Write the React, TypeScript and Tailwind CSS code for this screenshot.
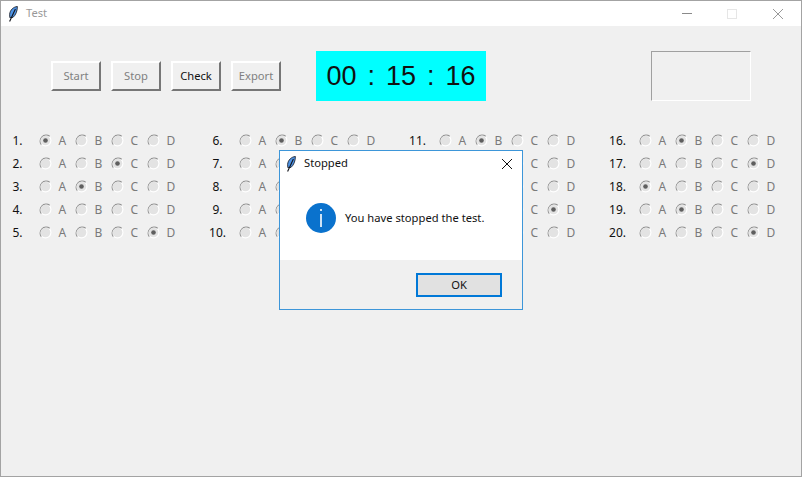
const FONT = "font-['Noto_Sans','Open_Sans',sans-serif]"

const ANSWERS: (string | null)[] = [
  'A', 'C', 'B', null, 'D',
  'B', null, null, null, null,
  'B', null, null, 'D', null,
  'B', 'D', 'A', 'B', 'D',
]

const OPTIONS = ['A', 'B', 'C', 'D']

function Feather({ className }: { className: string }) {
  return (
    <svg viewBox="0 0 10 16" className={className}>
      <path d="M9.4 0.5 C5.4 0.8 2 4 1.6 8.4 L1.8 11.6 L5 11.4 C7.8 9 9.4 5 9.4 0.5 Z" fill="#4f94e6" stroke="#10131a" strokeWidth="0.8" />
      <path d="M7.4 3 L1.6 15.4" stroke="#10131a" strokeWidth="1.1" fill="none" />
    </svg>
  )
}

function Radio({ checked }: { checked: boolean }) {
  return (
    <svg viewBox="0 0 13 13" className="h-[13px] w-[13px] shrink-0">
      <circle cx="6.5" cy="6.5" r="6" fill="#ffffff" />
      <path d="M2.3 10.7 A6 6 0 0 1 10.7 2.3" fill="none" stroke="#8f8f8f" strokeWidth="1.1" />
      <circle cx="6.5" cy="6.5" r="4.8" fill="#e3e3e3" />
      {checked && <circle cx="6.5" cy="6.5" r="2.3" fill="#5f5f5f" />}
    </svg>
  )
}

function Question({ number, answer }: { number: number; answer: string | null }) {
  return (
    <div className="flex h-[23px] items-center">
      <div className="w-[33px] text-center text-[12px] text-[#111111]">{number}.</div>
      <div className="ml-[4.5px] flex">
        {OPTIONS.map((option) => (
          <div key={option} className="flex w-[36px] items-center gap-[7px]">
            <Radio checked={answer === option} />
            <span className="text-[12px] text-[#7a7a7a]">{option}</span>
          </div>
        ))}
      </div>
    </div>
  )
}

function ToolButton({ label, active }: { label: string; active?: boolean }) {
  return (
    <button
      className={`h-[30px] w-[50px] border-2 border-t-[#ffffff] border-r-[#767676] border-b-[#767676] border-l-[#ffffff] bg-[#f0f0f0] text-[11.2px] ${
        active ? 'text-[#111111]' : 'text-[#808080]'
      }`}
    >
      {label}
    </button>
  )
}

function Dialog() {
  return (
    <div className="absolute top-[149px] left-[278px] flex h-[160px] w-[244px] flex-col border border-[#3d96d9] bg-white">
      <div className="flex h-[25px] items-center pl-[6px]">
        <Feather className="h-[16px] w-[10px]" />
        <span className="ml-[8px] text-[11.2px] text-[#111111]">Stopped</span>
        <svg viewBox="0 0 12 12" className="mr-[9px] ml-auto h-[12px] w-[12px]">
          <path d="M1 1 L11 11 M11 1 L1 11" stroke="#111111" strokeWidth="1" fill="none" />
        </svg>
      </div>
      <div className="flex flex-1 items-start pt-[27px] pl-[26px]">
        <div className="flex h-[30px] w-[30px] items-center justify-center rounded-full bg-[#0a72cd]">
          <svg viewBox="0 0 4 18" className="h-[18px] w-[4px]">
            <rect x="1.2" y="0" width="1.6" height="2" fill="#ffffff" />
            <rect x="1.2" y="5" width="1.6" height="13" fill="#ffffff" />
          </svg>
        </div>
        <span className="mt-[7px] ml-[9px] text-[11.2px] text-[#111111]">You have stopped the test.</span>
      </div>
      <div className="flex h-[49px] justify-end bg-[#f0f0f0] pt-[13px] pr-[20px]">
        <button className="h-[24px] w-[86px] border-2 border-[#0078d7] bg-[#e1e1e1] text-[11.2px] text-[#111111]">OK</button>
      </div>
    </div>
  )
}

export default function App() {
  const columns = [0, 1, 2, 3]

  return (
    <div className={`relative flex h-[477px] w-[802px] flex-col overflow-hidden border border-[#a3a3a3] bg-[#f0f0f0] ${FONT}`}>
      <div className="flex h-[25px] items-center bg-white pl-[7px]">
        <Feather className="h-[16px] w-[10px]" />
        <span className="ml-[8px] text-[11.2px] text-[#999999]">Test</span>
        <div className="ml-auto flex items-center">
          <div className="h-px w-[10px] bg-[#8a8a8a]" />
          <div className="ml-[35px] h-[10px] w-[10px] border border-[#e6e6e6]" />
          <svg viewBox="0 0 12 12" className="mr-[17px] ml-[35px] h-[12px] w-[12px]">
            <path d="M1 1 L11 11 M11 1 L1 11" stroke="#999999" strokeWidth="1" fill="none" />
          </svg>
        </div>
      </div>

      <div className="mt-[25px] flex h-[50px] pl-[50px]">
        <div className="flex items-center gap-[10px]">
          <ToolButton label="Start" />
          <ToolButton label="Stop" />
          <ToolButton label="Check" active />
          <ToolButton label="Export" />
        </div>
        <div className="ml-[35px] flex h-[50px] w-[170px] items-center justify-center gap-[11px] bg-[#00ffff] font-['Liberation_Sans',sans-serif] text-[27px] text-[#111111]">
          <span>00</span>
          <span>:</span>
          <span>15</span>
          <span>:</span>
          <span>16</span>
        </div>
        <div className="ml-[165px] h-[50px] w-[100px] border border-t-[#a0a0a0] border-r-[#ffffff] border-b-[#ffffff] border-l-[#a0a0a0]" />
      </div>

      <div className="mt-[28px] flex">
        {columns.map((column) => (
          <div key={column} className="w-[200px]">
            {ANSWERS.slice(column * 5, column * 5 + 5).map((answer, index) => (
              <Question key={index} number={column * 5 + index + 1} answer={answer} />
            ))}
          </div>
        ))}
      </div>

      <Dialog />
    </div>
  )
}
